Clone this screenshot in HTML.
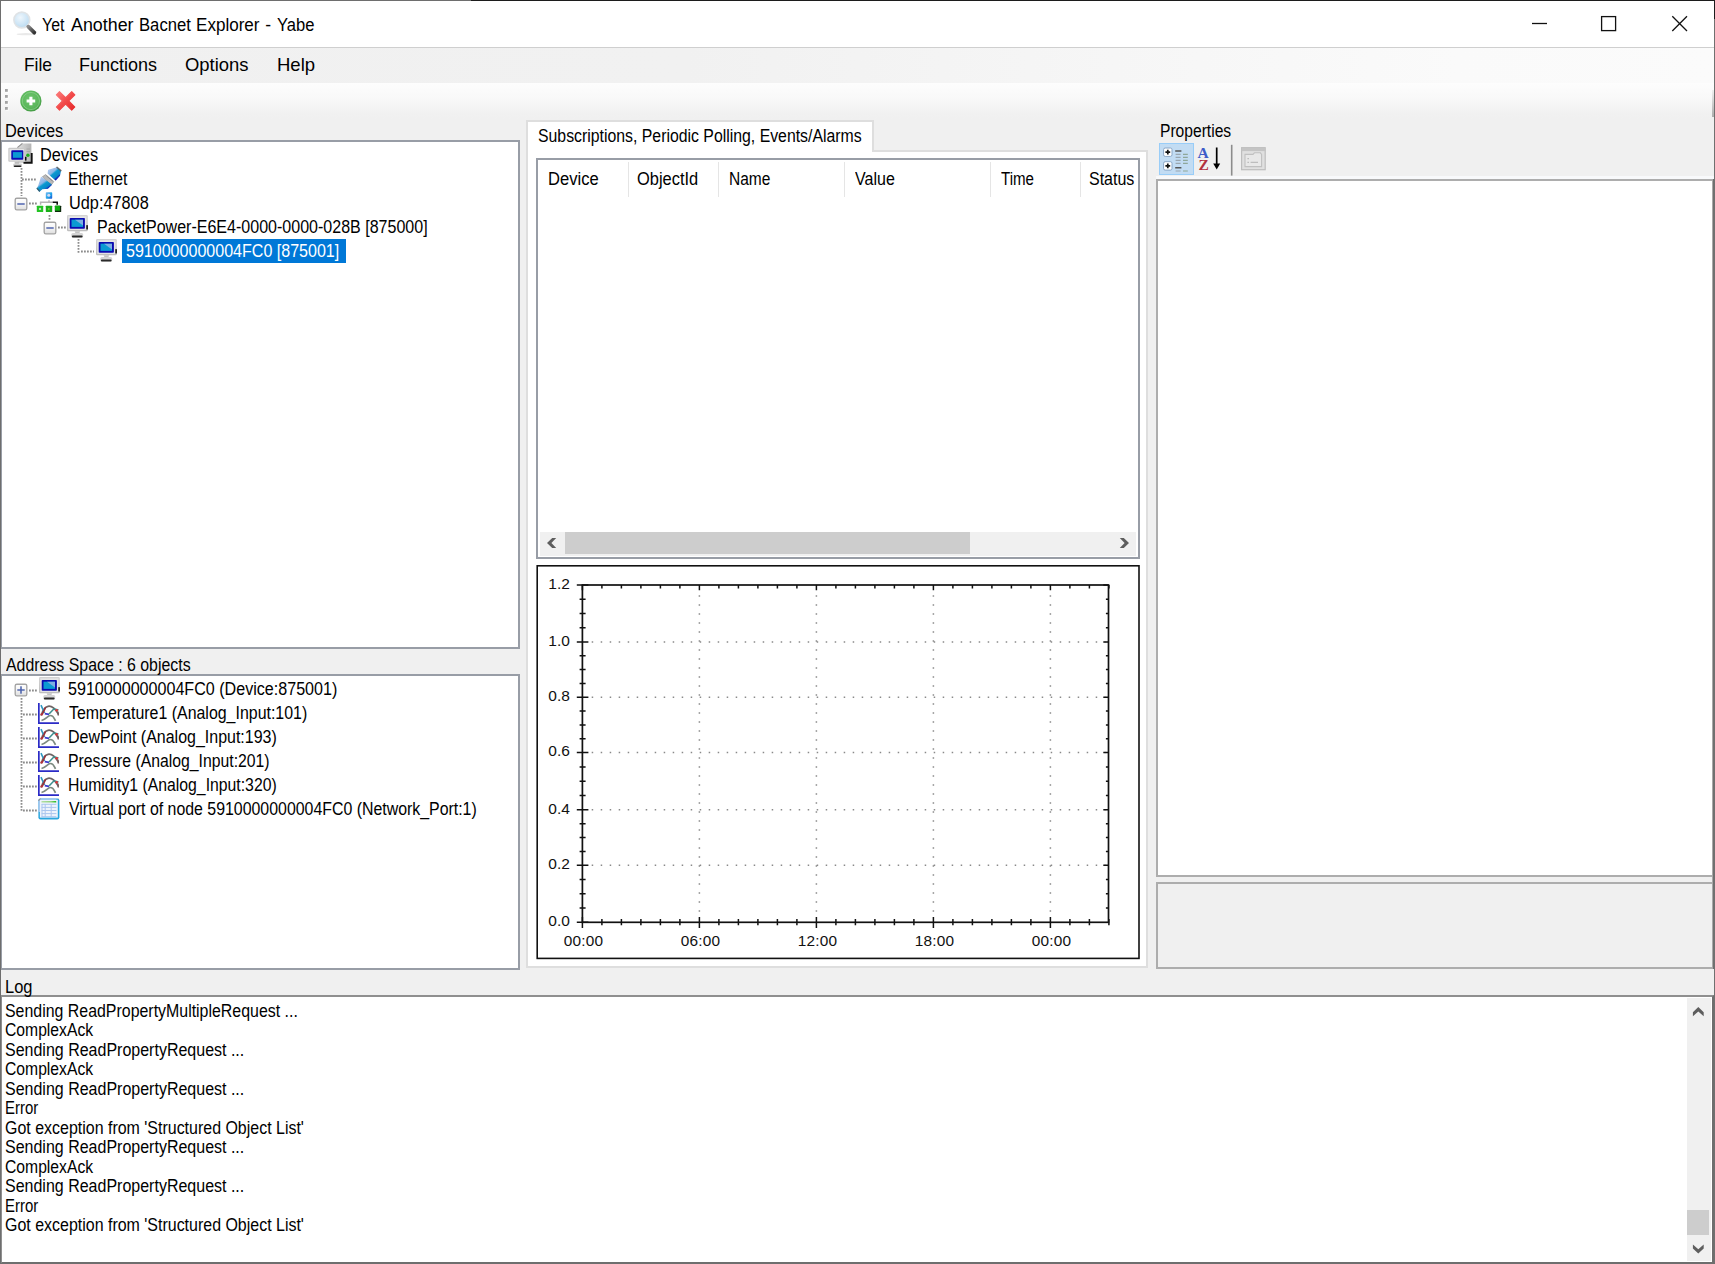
<!DOCTYPE html>
<html lang="en"><head><meta charset="utf-8"><title>Yet Another Bacnet Explorer - Yabe</title>
<style>
html,body{margin:0;padding:0;background:#f0f0f0}
body{width:1715px;height:1264px;overflow:hidden}
#win{position:relative;width:1715px;height:1264px;background:#f0f0f0;overflow:hidden;font:16.5px "Liberation Sans",sans-serif;color:#000}
#win div,#win span,#win svg{position:absolute}
.t{white-space:pre;line-height:1;transform-origin:0 0}
.box{box-sizing:border-box;background:#fff;border:2px solid #989da6}
.lt{box-sizing:border-box;background:#fff;border:2px solid #dedede}
.hsep{width:1px;top:162px;height:35px;background:#e5e5e5}

</style></head>
<body>
<div id="win">
<svg style="left:0;top:0" width="0" height="0"><defs><linearGradient id="mf" x1="0" y1="0" x2="0" y2="1"><stop offset="0" stop-color="#d4d4d4"/><stop offset="1" stop-color="#bdbdbd"/></linearGradient></defs><defs><linearGradient id="eb" x1="0" y1="0" x2="0" y2="1"><stop offset="0" stop-color="#fff"/><stop offset="0.5" stop-color="#f4f4f4"/><stop offset="1" stop-color="#dedede"/></linearGradient></defs></svg>
<div style="left:0;top:0;width:1715px;height:48px;background:#fff"></div>
<div style="left:0;top:47px;width:1715px;height:1px;background:#cfcfcf"></div>
<div style="left:0;top:48px;width:1715px;height:35px;background:linear-gradient(to right,#f0f0f0 0,#f1f1f1 40%,#fafafa 85%,#fbfbfb 100%)"></div>
<div style="left:0;top:83px;width:1715px;height:36px;background:linear-gradient(to bottom,#fdfdfd 0,#f9f9f9 40%,#f1f1f1 85%,#f0f0f0 100%)"></div>
<svg style="left:10px;top:8px" width="30" height="30" viewBox="10 8 30 30">
<defs><radialGradient id="mg" cx="0.4" cy="0.35" r="0.7"><stop offset="0" stop-color="#eef6fc"/><stop offset="0.6" stop-color="#cfe6f6"/><stop offset="1" stop-color="#b7d9f0"/></radialGradient>
<linearGradient id="mh" x1="0" y1="0" x2="1" y2="1"><stop offset="0" stop-color="#8a8a8a"/><stop offset="1" stop-color="#333"/></linearGradient></defs>
<ellipse cx="26" cy="34.2" rx="9.5" ry="1.1" fill="#e9e9e9"/>
<circle cx="21.8" cy="20" r="7.9" fill="url(#mg)" stroke="#dfe3e6" stroke-width="1.6"/>
<path d="M28.3 26.7L34.3 32.7" stroke="url(#mh)" stroke-width="3.8" stroke-linecap="round"/>
</svg>
<svg style="left:1520px;top:8px" width="190" height="32" viewBox="1520 8 190 32" fill="none" stroke="#111" stroke-width="1.3"><path d="M1532 23.5H1547"/><rect x="1601.6" y="16.6" width="14" height="14"/><path d="M1672.3 16.3L1687 31M1687 16.3L1672.3 31"/></svg>
<svg style="left:5.4px;top:89.2px" width="5" height="24"><rect x="1" y="1" width="2.6" height="2.6" fill="#fff"/><rect x="0" y="0" width="2.8" height="2.8" fill="#a3a3a3"/><rect x="1" y="7" width="2.6" height="2.6" fill="#fff"/><rect x="0" y="6" width="2.8" height="2.8" fill="#a3a3a3"/><rect x="1" y="13" width="2.6" height="2.6" fill="#fff"/><rect x="0" y="12" width="2.8" height="2.8" fill="#a3a3a3"/><rect x="1" y="19" width="2.6" height="2.6" fill="#fff"/><rect x="0" y="18" width="2.8" height="2.8" fill="#a3a3a3"/></svg>
<svg style="left:18px;top:88px" width="26" height="26" viewBox="18 88 26 26">
<defs><radialGradient id="gp" cx="0.45" cy="0.4" r="0.62"><stop offset="0" stop-color="#6cc56c"/><stop offset="0.7" stop-color="#5cb75c"/><stop offset="1" stop-color="#3f963f"/></radialGradient></defs>
<circle cx="30.9" cy="101" r="10.6" fill="url(#gp)"/>
<circle cx="30.9" cy="101" r="8.6" fill="none" stroke="#8fd48f" stroke-width="0.9" opacity="0.8"/>
<path d="M26.6 101H35.2M30.9 96.7V105.3" stroke="#fff" stroke-width="3.1"/>
</svg>
<svg style="left:53px;top:88px" width="26" height="26" viewBox="53 88 26 26">
<defs><linearGradient id="rx" gradientUnits="userSpaceOnUse" x1="-12" y1="0" x2="12" y2="0"><stop offset="0" stop-color="#fb7a7a"/><stop offset="0.5" stop-color="#f24a4a"/><stop offset="1" stop-color="#e62a2a"/></linearGradient></defs>
<path transform="translate(65.6 100.9) rotate(45)" fill="url(#rx)" stroke="url(#rx)" stroke-width="1" stroke-linejoin="round" d="M-10.9 -2.25H-2.25V-10.9H2.25V-2.25H10.9V2.25H2.25V10.9H-2.25V2.25H-10.9Z"/>
</svg>
<div class="box" style="left:1px;top:140px;width:519px;height:509px;border-left-width:1px"></div>
<div class="box" style="left:1px;top:674px;width:519px;height:296px;border-left-width:1px"></div>
<div class="box" style="left:1px;top:995px;width:1713px;height:269px;border-color:#8f8f8f #6e6e6e #6e6e6e #8f8f8f;border-left-width:1px"></div>
<div style="left:122.4px;top:239px;width:223.6px;height:23.6px;background:#0078d7"></div>
<svg style="left:19.8px;top:168.0px" width="3" height="28.0"><line x1="1.5" y1="0" x2="1.5" y2="28.0" stroke="#8c8c8c" stroke-width="1.8" stroke-dasharray="1.8 1.2"/></svg>
<svg style="left:22.4px;top:178.3px" width="14.6" height="3"><line x1="0" y1="1.5" x2="14.6" y2="1.5" stroke="#8c8c8c" stroke-width="1.8" stroke-dasharray="1.8 1.2"/></svg>
<svg style="left:29.2px;top:202.3px" width="8.3" height="3"><line x1="0" y1="1.5" x2="8.3" y2="1.5" stroke="#8c8c8c" stroke-width="1.8" stroke-dasharray="1.8 1.2"/></svg>
<svg style="left:48.3px;top:214.6px" width="3" height="6.0"><line x1="1.5" y1="0" x2="1.5" y2="6.0" stroke="#8c8c8c" stroke-width="1.8" stroke-dasharray="1.8 1.2"/></svg>
<svg style="left:57.8px;top:226.3px" width="8.2" height="3"><line x1="0" y1="1.5" x2="8.2" y2="1.5" stroke="#8c8c8c" stroke-width="1.8" stroke-dasharray="1.8 1.2"/></svg>
<svg style="left:76.7px;top:238.6px" width="3" height="14.0"><line x1="1.5" y1="0" x2="1.5" y2="14.0" stroke="#8c8c8c" stroke-width="1.8" stroke-dasharray="1.8 1.2"/></svg>
<svg style="left:80.5px;top:250.3px" width="13.7" height="3"><line x1="0" y1="1.5" x2="13.7" y2="1.5" stroke="#8c8c8c" stroke-width="1.8" stroke-dasharray="1.8 1.2"/></svg>
<svg style="left:13.3px;top:195.8px" width="16" height="16" viewBox="-8 -8 16 16">
<rect x="-5.8" y="-5.8" width="11.6" height="11.6" rx="1.6" fill="url(#eb)" stroke="#a4a4a4" stroke-width="1.35"/>
<rect x="-3.7" y="-0.75" width="7.4" height="1.5" fill="#5066b0"/></svg>
<svg style="left:41.7px;top:219.8px" width="16" height="16" viewBox="-8 -8 16 16">
<rect x="-5.8" y="-5.8" width="11.6" height="11.6" rx="1.6" fill="url(#eb)" stroke="#a4a4a4" stroke-width="1.35"/>
<rect x="-3.7" y="-0.75" width="7.4" height="1.5" fill="#5066b0"/></svg>
<svg style="left:7px;top:142px" width="28" height="27" viewBox="7 142 28 27">
<defs><linearGradient id="tw" x1="0" y1="0" x2="1" y2="0"><stop offset="0" stop-color="#e2e2e2"/><stop offset="1" stop-color="#b4b4b4"/></linearGradient></defs>
<path d="M17.4 147.6L22.4 143.4H31.4V163H17.4Z" fill="url(#tw)"/>
<path d="M17.4 147.6L22.4 143.4" stroke="#8e8e8e" stroke-width="1.2"/>
<path d="M26.5 149H30M26.5 151.5H30" stroke="#a8a8a8" stroke-width="1"/>
<path d="M31.7 153V162.7H23.5" stroke="#111" stroke-width="1.9" fill="none"/>
<circle cx="27.9" cy="155.3" r="1.7" fill="#1fae1f"/>
<rect x="8.3" y="147.8" width="16.8" height="14" rx="1" fill="#c9c9c9"/>
<rect x="9.5" y="149" width="14.4" height="11.6" fill="#e4e4e4"/>
<rect x="11.3" y="150.3" width="12" height="9.4" rx="0.8" fill="#0b0bb4"/>
<rect x="12.9" y="152.1" width="9" height="5.7" fill="#0a9ad2"/>
<rect x="25" y="156.8" width="1.5" height="3.8" fill="#111"/>
<path d="M14.5 161.8H19.5L19 164H15Z" fill="#bdbdbd"/>
<rect x="13.2" y="163.6" width="8.8" height="3.4" rx="1.2" fill="#cfcfcf"/>
<rect x="13.8" y="165.4" width="7.6" height="1.7" rx="0.8" fill="#222"/>
</svg>
<svg style="left:35px;top:165px" width="28" height="28" viewBox="35 165 28 28">
<defs><linearGradient id="pl" gradientUnits="userSpaceOnUse" x1="49" y1="168" x2="58.5" y2="179"><stop offset="0" stop-color="#b2caf0"/><stop offset="0.38" stop-color="#8fb6e6"/><stop offset="0.5" stop-color="#0a9ad0"/><stop offset="0.78" stop-color="#0a86c8"/><stop offset="0.9" stop-color="#0a16b8"/><stop offset="1" stop-color="#0808a4"/></linearGradient>
<linearGradient id="pm" gradientUnits="userSpaceOnUse" x1="40" y1="178" x2="48.5" y2="190"><stop offset="0" stop-color="#b2caf0"/><stop offset="0.36" stop-color="#8fb6e6"/><stop offset="0.5" stop-color="#0a9ad0"/><stop offset="0.76" stop-color="#0a86c8"/><stop offset="0.9" stop-color="#0a16b8"/><stop offset="1" stop-color="#0808a4"/></linearGradient></defs>
<path d="M42.4 176.8L45.6 174.6L53.8 181.6L51.2 185Z" fill="#b9b9b9" stroke="#9a9a9a" stroke-width="0.8" stroke-linejoin="round"/>
<path d="M46.4 175.8L52.6 181.2" stroke="#8a8a8a" stroke-width="0.9"/>
<path d="M41.4 177.4L51.2 184.8L47.8 188.2L42.2 188.6L39.4 191L37.2 188.6L38.6 186.4Z" fill="url(#pm)" stroke="url(#pm)" stroke-width="1.2" stroke-linejoin="round"/>
<path d="M37.1 188.4L39.5 191.1" stroke="#4a4a4a" stroke-width="1.2" stroke-linecap="round" opacity=".75"/>
<path d="M48.6 170.4L57 167.8L60.4 170.6L59.4 175.6L55.6 179.8L48.2 173.4Z" fill="url(#pl)" stroke="url(#pl)" stroke-width="1.2" stroke-linejoin="round"/>
<path d="M57 167.4L60.9 170.6" stroke="#5a5a5a" stroke-width="1.5" stroke-linecap="round" opacity=".8"/>
</svg>
<svg style="left:36px;top:191px" width="27" height="23" viewBox="36 191 27 23">
<defs><linearGradient id="ub" x1="0" y1="0" x2="1" y2="1"><stop offset="0" stop-color="#7ab8f2"/><stop offset="0.55" stop-color="#1ea4e8"/><stop offset="1" stop-color="#1a50d8"/></linearGradient></defs>
<rect x="45.8" y="192.2" width="6.4" height="6.5" rx="0.7" fill="url(#ub)"/><circle cx="48.8" cy="195.3" r="1.5" fill="#d4dcf4"/>
<path d="M40.6 204.8V202.2H53.5M49 200.2V202.2" stroke="#b4b4b4" stroke-width="1.5" fill="none"/>
<path d="M52.8 202.2H57.2V204.8" stroke="#111" stroke-width="1.6" fill="none"/>
<rect x="36.8" y="205.7" width="6.4" height="6.4" rx="0.6" fill="#24c424"/><circle cx="40" cy="208.9" r="1.2" fill="#bfe6bf"/>
<rect x="45.8" y="205.7" width="6.4" height="6.4" rx="0.6" fill="#1aae1a"/><circle cx="48.8" cy="208.9" r="1" fill="#6fcf3a"/>
<rect x="54.9" y="205.7" width="6.3" height="6.4" rx="0.6" fill="#0c2a0c"/><rect x="54.9" y="205.7" width="5" height="5" fill="#0fae0f"/>
</svg>
<svg style="left:65.2px;top:213.1px" width="26" height="28" viewBox="-2 -2 26 28">
<rect x="0" y="0" width="20.8" height="16.2" rx="1.2" fill="url(#mf)"/>
<rect x="1.3" y="1.3" width="18.2" height="13.6" fill="#e6e6e6"/>
<rect x="2.7" y="2.9" width="15.2" height="10.9" rx="0.8" fill="#0b0bb0"/>
<rect x="4.5" y="4.7" width="11.5" height="7.2" fill="#0a9ad2"/>
<path d="M8 4.7H16V10.5Z" fill="#7fb0e2"/>
<rect x="19.3" y="10.1" width="1.6" height="4.5" rx="0.6" fill="#111"/>
<path d="M7.6 16.2H13.2L12.4 18H8.4Z" fill="#c4c4c4"/>
<rect x="4.3" y="17.9" width="11.9" height="4.5" rx="1.5" fill="#d6d6d6"/>
<rect x="4.9" y="20.6" width="10.7" height="1.9" rx="0.9" fill="#2a2a2a"/>
</svg>
<svg style="left:94.0px;top:237.2px" width="26" height="28" viewBox="-2 -2 26 28">
<rect x="0" y="0" width="20.8" height="16.2" rx="1.2" fill="url(#mf)"/>
<rect x="1.3" y="1.3" width="18.2" height="13.6" fill="#e6e6e6"/>
<rect x="2.7" y="2.9" width="15.2" height="10.9" rx="0.8" fill="#0b0bb0"/>
<rect x="4.5" y="4.7" width="11.5" height="7.2" fill="#0a9ad2"/>
<path d="M8 4.7H16V10.5Z" fill="#7fb0e2"/>
<rect x="19.3" y="10.1" width="1.6" height="4.5" rx="0.6" fill="#111"/>
<path d="M7.6 16.2H13.2L12.4 18H8.4Z" fill="#c4c4c4"/>
<rect x="4.3" y="17.9" width="11.9" height="4.5" rx="1.5" fill="#d6d6d6"/>
<rect x="4.9" y="20.6" width="10.7" height="1.9" rx="0.9" fill="#2a2a2a"/>
</svg>
<svg style="left:19.8px;top:698.0px" width="3" height="113.0"><line x1="1.5" y1="0" x2="1.5" y2="113.0" stroke="#8c8c8c" stroke-width="1.8" stroke-dasharray="1.8 1.2"/></svg>
<svg style="left:29.2px;top:688.5px" width="8.3" height="3"><line x1="0" y1="1.5" x2="8.3" y2="1.5" stroke="#8c8c8c" stroke-width="1.8" stroke-dasharray="1.8 1.2"/></svg>
<svg style="left:23.3px;top:712.5px" width="14.0" height="3"><line x1="0" y1="1.5" x2="14.0" y2="1.5" stroke="#8c8c8c" stroke-width="1.8" stroke-dasharray="1.8 1.2"/></svg>
<svg style="left:23.3px;top:736.5px" width="14.0" height="3"><line x1="0" y1="1.5" x2="14.0" y2="1.5" stroke="#8c8c8c" stroke-width="1.8" stroke-dasharray="1.8 1.2"/></svg>
<svg style="left:23.3px;top:760.5px" width="14.0" height="3"><line x1="0" y1="1.5" x2="14.0" y2="1.5" stroke="#8c8c8c" stroke-width="1.8" stroke-dasharray="1.8 1.2"/></svg>
<svg style="left:23.3px;top:784.5px" width="14.0" height="3"><line x1="0" y1="1.5" x2="14.0" y2="1.5" stroke="#8c8c8c" stroke-width="1.8" stroke-dasharray="1.8 1.2"/></svg>
<svg style="left:23.3px;top:808.5px" width="14.0" height="3"><line x1="0" y1="1.5" x2="14.0" y2="1.5" stroke="#8c8c8c" stroke-width="1.8" stroke-dasharray="1.8 1.2"/></svg>
<svg style="left:13.3px;top:682.0px" width="16" height="16" viewBox="-8 -8 16 16">
<rect x="-5.8" y="-5.8" width="11.6" height="11.6" rx="1.6" fill="url(#eb)" stroke="#a4a4a4" stroke-width="1.35"/>
<rect x="-3.7" y="-0.75" width="7.4" height="1.5" fill="#5066b0"/><rect x="-0.75" y="-3.7" width="1.5" height="7.4" fill="#4860aa"/></svg>
<svg style="left:36.6px;top:675.4px" width="26" height="28" viewBox="-2 -2 26 28">
<rect x="0" y="0" width="20.8" height="16.2" rx="1.2" fill="url(#mf)"/>
<rect x="1.3" y="1.3" width="18.2" height="13.6" fill="#e6e6e6"/>
<rect x="2.7" y="2.9" width="15.2" height="10.9" rx="0.8" fill="#0b0bb0"/>
<rect x="4.5" y="4.7" width="11.5" height="7.2" fill="#0a9ad2"/>
<path d="M8 4.7H16V10.5Z" fill="#7fb0e2"/>
<rect x="19.3" y="10.1" width="1.6" height="4.5" rx="0.6" fill="#111"/>
<path d="M7.6 16.2H13.2L12.4 18H8.4Z" fill="#c4c4c4"/>
<rect x="4.3" y="17.9" width="11.9" height="4.5" rx="1.5" fill="#d6d6d6"/>
<rect x="4.9" y="20.6" width="10.7" height="1.9" rx="0.9" fill="#2a2a2a"/>
</svg>
<svg style="left:37.2px;top:701.7px" width="24" height="24" viewBox="-1 -1 24 24" fill="none">
<path d="M0.85 0V20.2H21" stroke="#2b2bc6" stroke-width="1.7"/>
<path d="M3.2 12.5C6 2 13 -1 20.4 11" stroke="#6e6464" stroke-width="1.7"/>
<path d="M3.5 17.5C8 16.5 9.5 12.5 12.5 12.5S16 15 17.5 17.8" stroke="#7d8a80" stroke-width="1.7"/>
<path d="M3 2.2L6.5 10" stroke="#2e96c0" stroke-width="1.6"/>
<path d="M4.2 11.5L7.6 4.4" stroke="#9a3038" stroke-width="1.6"/>
<path d="M6.8 10.6L11 11.3" stroke="#3a3ad0" stroke-width="1.8"/>
<path d="M11 11L16 5.8L20.5 7" stroke="#3d8e8e" stroke-width="1.6"/>
<circle cx="3.6" cy="11.4" r="1.2" fill="#b8323a"/>
<circle cx="18.6" cy="7.2" r="1.3" fill="#e03438"/>
<path d="M19.8 8.5L20.3 12.5" stroke="#6e5a5a" stroke-width="1.5"/>
</svg>
<svg style="left:37.2px;top:725.7px" width="24" height="24" viewBox="-1 -1 24 24" fill="none">
<path d="M0.85 0V20.2H21" stroke="#2b2bc6" stroke-width="1.7"/>
<path d="M3.2 12.5C6 2 13 -1 20.4 11" stroke="#6e6464" stroke-width="1.7"/>
<path d="M3.5 17.5C8 16.5 9.5 12.5 12.5 12.5S16 15 17.5 17.8" stroke="#7d8a80" stroke-width="1.7"/>
<path d="M3 2.2L6.5 10" stroke="#2e96c0" stroke-width="1.6"/>
<path d="M4.2 11.5L7.6 4.4" stroke="#9a3038" stroke-width="1.6"/>
<path d="M6.8 10.6L11 11.3" stroke="#3a3ad0" stroke-width="1.8"/>
<path d="M11 11L16 5.8L20.5 7" stroke="#3d8e8e" stroke-width="1.6"/>
<circle cx="3.6" cy="11.4" r="1.2" fill="#b8323a"/>
<circle cx="18.6" cy="7.2" r="1.3" fill="#e03438"/>
<path d="M19.8 8.5L20.3 12.5" stroke="#6e5a5a" stroke-width="1.5"/>
</svg>
<svg style="left:37.2px;top:749.7px" width="24" height="24" viewBox="-1 -1 24 24" fill="none">
<path d="M0.85 0V20.2H21" stroke="#2b2bc6" stroke-width="1.7"/>
<path d="M3.2 12.5C6 2 13 -1 20.4 11" stroke="#6e6464" stroke-width="1.7"/>
<path d="M3.5 17.5C8 16.5 9.5 12.5 12.5 12.5S16 15 17.5 17.8" stroke="#7d8a80" stroke-width="1.7"/>
<path d="M3 2.2L6.5 10" stroke="#2e96c0" stroke-width="1.6"/>
<path d="M4.2 11.5L7.6 4.4" stroke="#9a3038" stroke-width="1.6"/>
<path d="M6.8 10.6L11 11.3" stroke="#3a3ad0" stroke-width="1.8"/>
<path d="M11 11L16 5.8L20.5 7" stroke="#3d8e8e" stroke-width="1.6"/>
<circle cx="3.6" cy="11.4" r="1.2" fill="#b8323a"/>
<circle cx="18.6" cy="7.2" r="1.3" fill="#e03438"/>
<path d="M19.8 8.5L20.3 12.5" stroke="#6e5a5a" stroke-width="1.5"/>
</svg>
<svg style="left:37.2px;top:773.7px" width="24" height="24" viewBox="-1 -1 24 24" fill="none">
<path d="M0.85 0V20.2H21" stroke="#2b2bc6" stroke-width="1.7"/>
<path d="M3.2 12.5C6 2 13 -1 20.4 11" stroke="#6e6464" stroke-width="1.7"/>
<path d="M3.5 17.5C8 16.5 9.5 12.5 12.5 12.5S16 15 17.5 17.8" stroke="#7d8a80" stroke-width="1.7"/>
<path d="M3 2.2L6.5 10" stroke="#2e96c0" stroke-width="1.6"/>
<path d="M4.2 11.5L7.6 4.4" stroke="#9a3038" stroke-width="1.6"/>
<path d="M6.8 10.6L11 11.3" stroke="#3a3ad0" stroke-width="1.8"/>
<path d="M11 11L16 5.8L20.5 7" stroke="#3d8e8e" stroke-width="1.6"/>
<circle cx="3.6" cy="11.4" r="1.2" fill="#b8323a"/>
<circle cx="18.6" cy="7.2" r="1.3" fill="#e03438"/>
<path d="M19.8 8.5L20.3 12.5" stroke="#6e5a5a" stroke-width="1.5"/>
</svg>
<svg style="left:38.3px;top:798.4px" width="22" height="22" viewBox="0 0 22 22">
<defs><linearGradient id="tg" x1="0" y1="0" x2="1" y2="0"><stop offset="0" stop-color="#b4e0a8"/><stop offset="0.65" stop-color="#8fd07a"/><stop offset="1" stop-color="#18bc18"/></linearGradient></defs>
<rect x="0.4" y="0.4" width="21" height="21" rx="2.2" fill="#2aa6de"/>
<path d="M0.4 14V2.6Q0.4 0.4 2.6 0.4H19.2L18 1.8H1.9V14Z" fill="#a9c8f0"/>
<path d="M0.4 3V2.6Q0.4 0.4 2.6 0.4H3.2L1 3Z" fill="#8a8a8a"/>
<path d="M21.4 3V2.6Q21.4 0.4 19.2 0.4H20.5Z" fill="#8a8a8a"/>
<rect x="1.9" y="1.8" width="17.9" height="17.8" fill="#eef3fc"/>
<rect x="3.3" y="3.1" width="15" height="1.5" rx="0.7" fill="url(#tg)"/>
<g stroke="#abc6ee" stroke-width="1" fill="none"><path d="M3.6 6.3H18.4M3.6 9.4H18.4M3.6 12.5H18.4M3.6 15.6H18.4M3.6 18.7H18.4M4 6V19M7.2 6V19M13.2 6V19"/></g>
</svg>
<div style="left:1687px;top:998.4px;width:24px;height:262.2px;background:#f0f0f0"></div>
<div style="left:1687px;top:1210px;width:22.4px;height:25px;background:#cdcdcd"></div>
<svg style="left:1687px;top:998px" width="24" height="263" viewBox="1687 998 24 263" fill="#5e5e5e"><path d="M1698.3 1007L1703.7 1012.2V1016.2L1698.3 1011.4L1692.9 1016.2V1012.2Z"/><path d="M1698.3 1253.6L1703.7 1248.4V1244.4L1698.3 1249.2L1692.9 1244.4V1248.4Z"/></svg>
<div class="lt" style="left:526px;top:150px;width:622px;height:818px"></div>
<div class="lt" style="left:526px;top:120px;width:348px;height:32px;border-bottom:none"></div>
<div class="box" style="left:536px;top:158px;width:604px;height:401px"></div>
<div class="hsep" style="left:628px"></div>
<div class="hsep" style="left:718px"></div>
<div class="hsep" style="left:844px"></div>
<div class="hsep" style="left:990px"></div>
<div class="hsep" style="left:1080px"></div>
<div style="left:540px;top:532px;width:596px;height:23.6px;background:#f0f0f0"></div>
<div style="left:565px;top:532px;width:405px;height:22px;background:#cdcdcd"></div>
<svg style="left:540px;top:532px" width="596" height="24" viewBox="540 532 596 24" fill="#5e5e5e"><path d="M556.2 538H552.2L547 543L552.2 548H556.2L551.4 543Z"/><path d="M1119.8 538H1123.8L1129 543L1123.8 548H1119.8L1124.6 543Z"/></svg>
<svg style="left:536px;top:564px" width="604" height="396" viewBox="536 564 604 396" font-family="'Liberation Sans',sans-serif" fill="#111"><rect x="537.2" y="565.8" width="601.8" height="392.6" fill="#fff" stroke="#111" stroke-width="1.6"/><path d="M699.40 595.30V918.3 M816.40 595.30V918.3 M933.40 595.30V918.3 M1050.40 595.30V918.3 M591.70 641.90H1105.5 M591.70 697.30H1105.5 M591.70 752.60H1105.5 M591.70 809.80H1105.5 M591.70 865.30H1105.5" stroke="#8a8a8a" stroke-width="1.5" stroke-dasharray="1.5 7.5" fill="none"/><path d="M582.40 585.0v5.2 M582.40 917.10V927.90 M601.90 585.0v3.4 M601.90 919.10V925.30 M621.40 585.0v3.4 M621.40 919.10V925.30 M640.90 585.0v3.4 M640.90 919.10V925.30 M660.40 585.0v3.4 M660.40 919.10V925.30 M679.90 585.0v3.4 M679.90 919.10V925.30 M699.40 585.0v5.2 M699.40 917.10V927.90 M718.90 585.0v3.4 M718.90 919.10V925.30 M738.40 585.0v3.4 M738.40 919.10V925.30 M757.90 585.0v3.4 M757.90 919.10V925.30 M777.40 585.0v3.4 M777.40 919.10V925.30 M796.90 585.0v3.4 M796.90 919.10V925.30 M816.40 585.0v5.2 M816.40 917.10V927.90 M835.90 585.0v3.4 M835.90 919.10V925.30 M855.40 585.0v3.4 M855.40 919.10V925.30 M874.90 585.0v3.4 M874.90 919.10V925.30 M894.40 585.0v3.4 M894.40 919.10V925.30 M913.90 585.0v3.4 M913.90 919.10V925.30 M933.40 585.0v5.2 M933.40 917.10V927.90 M952.90 585.0v3.4 M952.90 919.10V925.30 M972.40 585.0v3.4 M972.40 919.10V925.30 M991.90 585.0v3.4 M991.90 919.10V925.30 M1011.40 585.0v3.4 M1011.40 919.10V925.30 M1030.90 585.0v3.4 M1030.90 919.10V925.30 M1050.40 585.0v5.2 M1050.40 917.10V927.90 M1069.90 585.0v3.4 M1069.90 919.10V925.30 M1089.40 585.0v3.4 M1089.40 919.10V925.30 M1108.90 585.0v3.4 M1108.90 919.10V925.30 M576.80 585.00H588.40 M1108.50 585.00h-5.2 M579.60 599.23H585.60 M1108.50 599.23h-2.6 M579.60 613.45H585.60 M1108.50 613.45h-2.6 M579.60 627.67H585.60 M1108.50 627.67h-2.6 M576.80 641.90H588.40 M1108.50 641.90h-5.2 M579.60 655.75H585.60 M1108.50 655.75h-2.6 M579.60 669.60H585.60 M1108.50 669.60h-2.6 M579.60 683.45H585.60 M1108.50 683.45h-2.6 M576.80 697.30H588.40 M1108.50 697.30h-5.2 M579.60 711.12H585.60 M1108.50 711.12h-2.6 M579.60 724.95H585.60 M1108.50 724.95h-2.6 M579.60 738.77H585.60 M1108.50 738.77h-2.6 M576.80 752.60H588.40 M1108.50 752.60h-5.2 M579.60 766.90H585.60 M1108.50 766.90h-2.6 M579.60 781.20H585.60 M1108.50 781.20h-2.6 M579.60 795.50H585.60 M1108.50 795.50h-2.6 M576.80 809.80H588.40 M1108.50 809.80h-5.2 M579.60 823.67H585.60 M1108.50 823.67h-2.6 M579.60 837.55H585.60 M1108.50 837.55h-2.6 M579.60 851.42H585.60 M1108.50 851.42h-2.6 M576.80 865.30H588.40 M1108.50 865.30h-5.2 M579.60 879.55H585.60 M1108.50 879.55h-2.6 M579.60 893.80H585.60 M1108.50 893.80h-2.6 M579.60 908.05H585.60 M1108.50 908.05h-2.6 M576.80 922.30H588.40" stroke="#111" stroke-width="1.5" fill="none"/><rect x="582.4" y="585.0" width="526.10" height="337.30" fill="none" stroke="#111" stroke-width="1.7"/><text x="569.9" y="588.70" font-size="15.5" text-anchor="end">1.2</text><text x="569.9" y="645.60" font-size="15.5" text-anchor="end">1.0</text><text x="569.9" y="701.00" font-size="15.5" text-anchor="end">0.8</text><text x="569.9" y="756.30" font-size="15.5" text-anchor="end">0.6</text><text x="569.9" y="813.50" font-size="15.5" text-anchor="end">0.4</text><text x="569.9" y="869.00" font-size="15.5" text-anchor="end">0.2</text><text x="569.9" y="926.00" font-size="15.5" text-anchor="end">0.0</text><text x="583.40" y="946.1" font-size="15.4" letter-spacing="0.2" text-anchor="middle">00:00</text><text x="700.40" y="946.1" font-size="15.4" letter-spacing="0.2" text-anchor="middle">06:00</text><text x="817.40" y="946.1" font-size="15.4" letter-spacing="0.2" text-anchor="middle">12:00</text><text x="934.40" y="946.1" font-size="15.4" letter-spacing="0.2" text-anchor="middle">18:00</text><text x="1051.40" y="946.1" font-size="15.4" letter-spacing="0.2" text-anchor="middle">00:00</text></svg>
<div style="left:1158.5px;top:143px;width:35px;height:31.5px;box-sizing:border-box;background:#c2dcf3;border:1.5px solid #99cdf8"></div>
<svg style="left:1158px;top:142px" width="112" height="36" viewBox="1158 142 112 36">
<g fill="#fff" stroke="#8aa6c6" stroke-width="1"><rect x="1163.6" y="148" width="8.4" height="8.4" rx="1.6"/><rect x="1163.6" y="161.7" width="8.4" height="8.4" rx="1.6"/></g>
<path d="M1165.4 152.2H1170.2M1167.8 149.8V154.6M1165.4 165.9H1170.2M1167.8 163.5V168.3" stroke="#111" stroke-width="1.7"/>
<path d="M1175.2 151H1181.4M1175.2 167.8H1181.4" stroke="#555" stroke-width="1.6"/>
<g stroke="#9aa6b0" stroke-width="1.2"><path d="M1175.6 154.3H1180.6M1175.6 157.3H1180.6M1175.6 160.3H1180.6M1175.6 163.3H1180.6M1175.6 171H1180.6"/><path d="M1183 154.3H1187.8M1183 157.3H1187.8M1183 160.3H1187.8M1183 163.3H1187.8M1183 171H1187.8" stroke="#8fa79a"/></g>
<text x="1197.6" y="158.1" font-family="'Liberation Serif',serif" font-weight="bold" font-size="15.5" fill="#3e5cc8">A</text>
<text x="1198.4" y="170.2" font-family="'Liberation Serif',serif" font-weight="bold" font-size="15.5" fill="#b23040">Z</text>
<path d="M1216.7 147.5V167" stroke="#000" stroke-width="1.7"/><path d="M1213.2 163.6L1216.7 169.6L1220.2 163.6Z" fill="#000"/>
<path d="M1231.7 144.8V175.6" stroke="#8c8c8c" stroke-width="1.6"/>
<rect x="1241.6" y="147.7" width="23.6" height="22" fill="#e0e0e0" stroke="#bdbdbd" stroke-width="1.2"/>
<rect x="1241.6" y="147.7" width="23.6" height="3.4" fill="#c4c4c4"/>
<path d="M1245 166.6V154.4H1253L1254.4 152.8H1260.4L1261.6 154.4V166.6Z" fill="#e8e8e8" stroke="#c0c0c0" stroke-width="1.1"/>
<path d="M1247.4 158.6H1249M1247.4 162.4H1249M1250.6 162.4H1258" stroke="#bdbdbd" stroke-width="1.3"/>
</svg>
<div style="left:1156px;top:176.4px;width:1558px;height:2.6px;background:#f8f9fb"></div>
<div style="left:1156px;top:179px;width:1558px;height:698px;box-sizing:border-box;background:#fff;border:2px solid #adadad"></div>
<div style="left:1156px;top:882px;width:1558px;height:87px;box-sizing:border-box;background:#f0f0f0;border:2px solid #adadad"></div>
<div style="left:0;top:0;width:471px;height:1px;background:#6e6e6e"></div>
<div style="left:471px;top:0;width:1244px;height:1px;background:#1c1c1c"></div>
<div style="left:0;top:0;width:1px;height:1264px;background:#6e6e6e"></div>
<div style="left:1714px;top:0;width:1px;height:1264px;background:#707070"></div>
<div style="left:1712px;top:179px;width:2px;height:790px;background:linear-gradient(to right,#a8a8a8 0,#a8a8a8 50%,#707070 50%)"></div>
<div style="left:1712px;top:90px;width:2px;height:27px;background:linear-gradient(to bottom,#ececec,#9c9c9c);opacity:.8"></div>
<div style="left:1714px;top:0;width:1px;height:19px;background:#1c1c1c"></div>
<div style="left:0;top:1263px;width:1715px;height:1px;background:#6e6e6e"></div>
<!-- text -->
<span class="t " style="left:41.69px;top:16.60px;font:normal 17.5px/1 'Liberation Sans',sans-serif;color:#000;transform:scaleX(0.9083)">Yet</span>
<span class="t " style="left:71.00px;top:16.60px;font:normal 17.5px/1 'Liberation Sans',sans-serif;color:#000;transform:scaleX(1.0197)">Another</span>
<span class="t " style="left:139.25px;top:16.60px;font:normal 17.5px/1 'Liberation Sans',sans-serif;color:#000;transform:scaleX(0.9528)">Bacnet</span>
<span class="t " style="left:195.93px;top:16.60px;font:normal 17.5px/1 'Liberation Sans',sans-serif;color:#000;transform:scaleX(0.9750)">Explorer</span>
<span class="t " style="left:265.30px;top:16.60px;font:normal 17.5px/1 'Liberation Sans',sans-serif;color:#000;transform:scaleX(1.0000)">-</span>
<span class="t " style="left:276.65px;top:16.60px;font:normal 17.5px/1 'Liberation Sans',sans-serif;color:#000;transform:scaleX(0.9474)">Yabe</span>
<span class="t " style="left:23.76px;top:55.90px;font:normal 18.5px/1 'Liberation Sans',sans-serif;color:#000;transform:scaleX(0.9393)">File</span>
<span class="t " style="left:79.23px;top:55.90px;font:normal 18.5px/1 'Liberation Sans',sans-serif;color:#000;transform:scaleX(0.9722)">Functions</span>
<span class="t " style="left:185.40px;top:55.90px;font:normal 18.5px/1 'Liberation Sans',sans-serif;color:#000;transform:scaleX(0.9968)">Options</span>
<span class="t " style="left:277.00px;top:55.90px;font:normal 18.5px/1 'Liberation Sans',sans-serif;color:#000;transform:scaleX(1.0000)">Help</span>
<span class="t " style="left:5.16px;top:123.05px;font:normal 17.5px/1 'Liberation Sans',sans-serif;color:#000;transform:scaleX(0.9361)">Devices</span>
<span class="t " style="left:5.80px;top:656.95px;font:normal 17.5px/1 'Liberation Sans',sans-serif;color:#000;transform:scaleX(0.9079)">Address Space : 6 objects</span>
<span class="t " style="left:4.66px;top:978.65px;font:normal 17.5px/1 'Liberation Sans',sans-serif;color:#000;transform:scaleX(0.9407)">Log</span>
<span class="t " style="left:1159.71px;top:123.05px;font:normal 17.5px/1 'Liberation Sans',sans-serif;color:#000;transform:scaleX(0.8923)">Properties</span>
<span class="t " style="left:39.77px;top:146.85px;font:normal 17.5px/1 'Liberation Sans',sans-serif;color:#000;transform:scaleX(0.9328)">Devices</span>
<span class="t " style="left:68.00px;top:170.85px;font:normal 17.5px/1 'Liberation Sans',sans-serif;color:#000;transform:scaleX(0.8985)">Ethernet</span>
<span class="t " style="left:68.57px;top:194.85px;font:normal 17.5px/1 'Liberation Sans',sans-serif;color:#000;transform:scaleX(0.9310)">Udp:47808</span>
<span class="t " style="left:96.68px;top:218.85px;font:normal 17.5px/1 'Liberation Sans',sans-serif;color:#000;transform:scaleX(0.9159)">PacketPower-E6E4-0000-0000-028B [875000]</span>
<span class="t " style="left:125.78px;top:242.85px;font:normal 17.5px/1 'Liberation Sans',sans-serif;color:#fff;transform:scaleX(0.9169)">5910000000004FC0 [875001]</span>
<span class="t " style="left:68.18px;top:680.95px;font:normal 17.5px/1 'Liberation Sans',sans-serif;color:#000;transform:scaleX(0.9196)">5910000000004FC0 (Device:875001)</span>
<span class="t " style="left:69.10px;top:704.95px;font:normal 17.5px/1 'Liberation Sans',sans-serif;color:#000;transform:scaleX(0.9103)">Temperature1 (Analog_Input:101)</span>
<span class="t " style="left:68.19px;top:728.95px;font:normal 17.5px/1 'Liberation Sans',sans-serif;color:#000;transform:scaleX(0.9132)">DewPoint (Analog_Input:193)</span>
<span class="t " style="left:68.20px;top:752.95px;font:normal 17.5px/1 'Liberation Sans',sans-serif;color:#000;transform:scaleX(0.9009)">Pressure (Analog_Input:201)</span>
<span class="t " style="left:68.20px;top:776.95px;font:normal 17.5px/1 'Liberation Sans',sans-serif;color:#000;transform:scaleX(0.9013)">Humidity1 (Analog_Input:320)</span>
<span class="t " style="left:69.10px;top:800.95px;font:normal 17.5px/1 'Liberation Sans',sans-serif;color:#000;transform:scaleX(0.9078)">Virtual port of node 5910000000004FC0 (Network_Port:1)</span>
<span class="t " style="left:537.50px;top:127.95px;font:normal 17.5px/1 'Liberation Sans',sans-serif;color:#000;transform:scaleX(0.9042)">Subscriptions, Periodic Polling, Events/Alarms</span>
<span class="t " style="left:547.85px;top:171.05px;font:normal 17.5px/1 'Liberation Sans',sans-serif;color:#000;transform:scaleX(0.9462)">Device</span>
<span class="t " style="left:637.16px;top:171.05px;font:normal 17.5px/1 'Liberation Sans',sans-serif;color:#000;transform:scaleX(0.9397)">ObjectId</span>
<span class="t " style="left:728.51px;top:171.05px;font:normal 17.5px/1 'Liberation Sans',sans-serif;color:#000;transform:scaleX(0.8867)">Name</span>
<span class="t " style="left:854.50px;top:171.05px;font:normal 17.5px/1 'Liberation Sans',sans-serif;color:#000;transform:scaleX(0.9163)">Value</span>
<span class="t " style="left:1000.70px;top:171.05px;font:normal 17.5px/1 'Liberation Sans',sans-serif;color:#000;transform:scaleX(0.8632)">Time</span>
<span class="t " style="left:1089.19px;top:171.05px;font:normal 17.5px/1 'Liberation Sans',sans-serif;color:#000;transform:scaleX(0.9146)">Status</span>
<span class="t " style="left:4.69px;top:1002.65px;font:normal 17.5px/1 'Liberation Sans',sans-serif;color:#000;transform:scaleX(0.9094)">Sending ReadPropertyMultipleRequest ...</span>
<span class="t " style="left:4.70px;top:1022.15px;font:normal 17.5px/1 'Liberation Sans',sans-serif;color:#000;transform:scaleX(0.8969)">ComplexAck</span>
<span class="t " style="left:4.69px;top:1041.65px;font:normal 17.5px/1 'Liberation Sans',sans-serif;color:#000;transform:scaleX(0.9143)">Sending ReadPropertyRequest ...</span>
<span class="t " style="left:4.70px;top:1061.15px;font:normal 17.5px/1 'Liberation Sans',sans-serif;color:#000;transform:scaleX(0.8969)">ComplexAck</span>
<span class="t " style="left:4.69px;top:1080.65px;font:normal 17.5px/1 'Liberation Sans',sans-serif;color:#000;transform:scaleX(0.9143)">Sending ReadPropertyRequest ...</span>
<span class="t " style="left:4.75px;top:1100.15px;font:normal 17.5px/1 'Liberation Sans',sans-serif;color:#000;transform:scaleX(0.8526)">Error</span>
<span class="t " style="left:4.69px;top:1119.65px;font:normal 17.5px/1 'Liberation Sans',sans-serif;color:#000;transform:scaleX(0.9123)">Got exception from 'Structured Object List'</span>
<span class="t " style="left:4.69px;top:1139.15px;font:normal 17.5px/1 'Liberation Sans',sans-serif;color:#000;transform:scaleX(0.9143)">Sending ReadPropertyRequest ...</span>
<span class="t " style="left:4.70px;top:1158.65px;font:normal 17.5px/1 'Liberation Sans',sans-serif;color:#000;transform:scaleX(0.8969)">ComplexAck</span>
<span class="t " style="left:4.69px;top:1178.15px;font:normal 17.5px/1 'Liberation Sans',sans-serif;color:#000;transform:scaleX(0.9143)">Sending ReadPropertyRequest ...</span>
<span class="t " style="left:4.75px;top:1197.65px;font:normal 17.5px/1 'Liberation Sans',sans-serif;color:#000;transform:scaleX(0.8526)">Error</span>
<span class="t " style="left:4.69px;top:1217.15px;font:normal 17.5px/1 'Liberation Sans',sans-serif;color:#000;transform:scaleX(0.9123)">Got exception from 'Structured Object List'</span>
</div>
</body></html>
